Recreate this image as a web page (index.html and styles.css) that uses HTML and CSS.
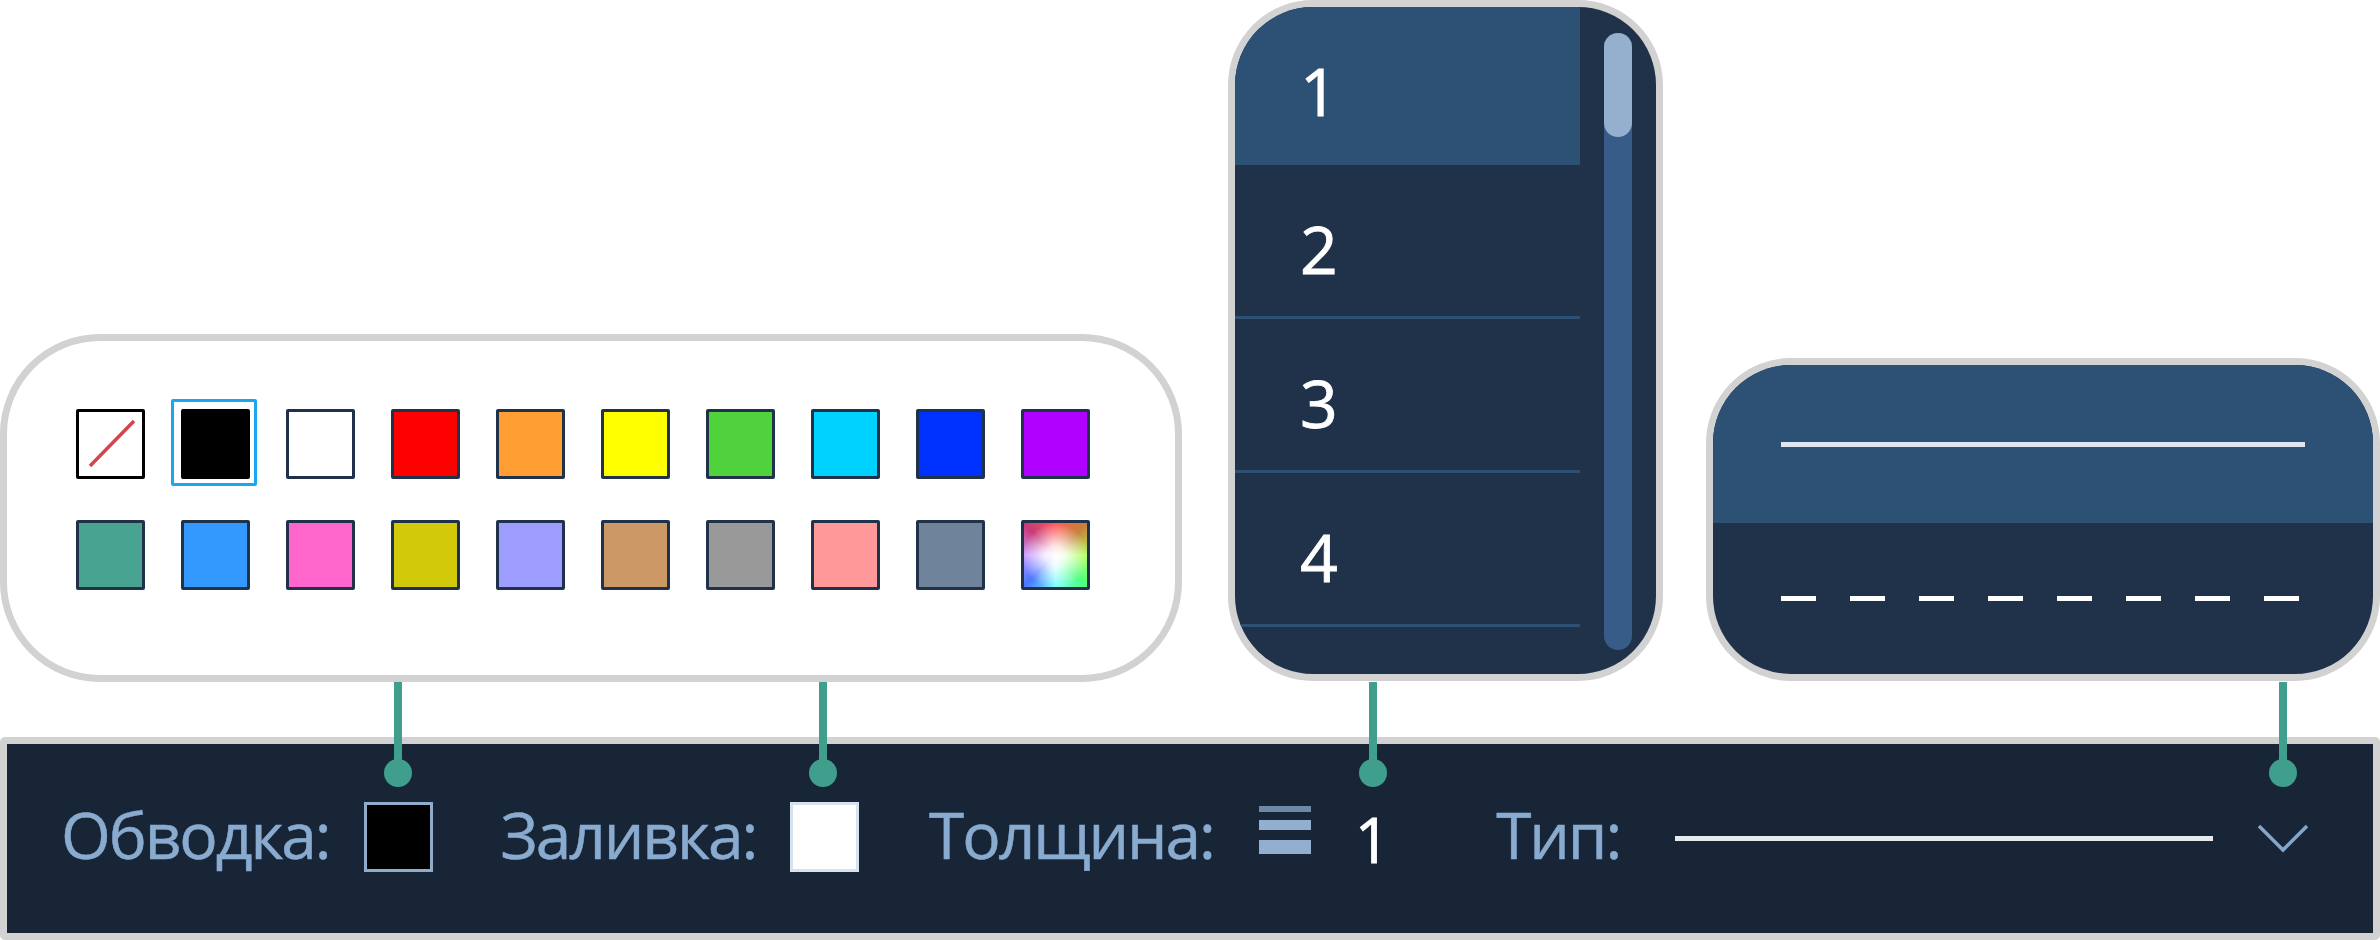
FILE: index.html
```html
<!DOCTYPE html>
<html lang="ru">
<head>
    <meta charset="UTF-8">
    <title>Панель обводки</title>
    <link rel="stylesheet" href="styles.css">
</head>
<body>
    <div class="board">
        <div class="callouts">
            <!-- Color palette -->
            <div class="panel palette">
                <div class="swatch swatch-none">
                    <svg class="none-line" viewBox="0 0 63 64"><line x1="11" y1="54" x2="55" y2="9"/></svg>
                </div>
                <div class="swatch swatch-selected" style="background:#000"></div>
                <div class="swatch" style="background:#fff"></div>
                <div class="swatch" style="background:#ff0000"></div>
                <div class="swatch" style="background:#ff9e33"></div>
                <div class="swatch" style="background:#ffff00"></div>
                <div class="swatch" style="background:#50d23c"></div>
                <div class="swatch" style="background:#00d2ff"></div>
                <div class="swatch" style="background:#0032ff"></div>
                <div class="swatch" style="background:#b000ff"></div>
                <div class="swatch" style="background:#48a391"></div>
                <div class="swatch" style="background:#3399ff"></div>
                <div class="swatch" style="background:#ff66cc"></div>
                <div class="swatch" style="background:#d2c90a"></div>
                <div class="swatch" style="background:#9d9dff"></div>
                <div class="swatch" style="background:#cc9966"></div>
                <div class="swatch" style="background:#999999"></div>
                <div class="swatch" style="background:#ff9999"></div>
                <div class="swatch" style="background:#6f849b"></div>
                <div class="swatch swatch-custom"></div>
            </div>

            <!-- Width dropdown -->
            <div class="panel widths">
                <ul class="width-list">
                    <li class="width-item is-active">1</li>
                    <li class="width-item">2</li>
                    <li class="width-item">3</li>
                    <li class="width-item">4</li>
                </ul>
                <div class="scroll-col">
                    <div class="scroll-track"><div class="scroll-thumb"></div></div>
                </div>
            </div>

            <!-- Line type dropdown -->
            <div class="panel types">
                <div class="type-row is-active"><span class="type-solid"></span></div>
                <div class="type-row">
                    <span class="type-dashes">
                        <i></i><i></i><i></i><i></i><i></i><i></i><i></i><i></i>
                    </span>
                </div>
            </div>
        </div>

        <!-- Toolbar -->
        <div class="toolbar">
            <span class="tool-label label-stroke">Обводка:</span>
            <span class="tool-color color-stroke"></span>
            <span class="tool-label label-fill">Заливка:</span>
            <span class="tool-color color-fill"></span>
            <span class="tool-label label-width">Толщина:</span>
            <span class="width-icon"><i></i><i></i><i></i></span>
            <span class="width-value">1</span>
            <span class="tool-label label-type">Тип:</span>
            <span class="type-preview"></span>
            <svg class="chevron" viewBox="0 0 52 29"><polyline points="2,2 26,26 50,2"/></svg>
        </div>

        <!-- Leader lines -->
        <span class="pin pin-stroke"></span>
        <span class="pin pin-fill"></span>
        <span class="pin pin-width"></span>
        <span class="pin pin-type"></span>
    </div>
</body>
</html>
```

FILE: styles.css
```css
body { margin: 0; background: #fff; font-family: "Open Sans", "Noto Sans", sans-serif; }
.board { position: relative; width: 2380px; height: 940px; overflow: hidden; filter: blur(.5px); }

.callouts { display: flex; align-items: flex-end; height: 682px; }
.panel { box-sizing: border-box; border: 7px solid #d2d2d2; overflow: hidden; }

/* palette */
.palette { display: grid; grid-template-columns: repeat(10, 69px); grid-auto-rows: 70px; column-gap: 36px; row-gap: 41px; align-content: start; width: 1182px; height: 348px; padding: 68px 0 0 69px; background: #fff; border-radius: 100px; }
.swatch { position: relative; box-sizing: border-box; border: 3.5px solid #1f3249; border-radius: 2px; }
.swatch-none { background: #fff; border-color: #000; }
.none-line { display: block; width: 100%; height: 100%; }
.none-line line { stroke: #d0474f; stroke-width: 3.5; }
.swatch-selected { border-color: #000; }
.swatch-selected::after { content: ""; position: absolute; left: -13px; top: -13px; right: -10px; bottom: -10px; border: 3px solid #1aa7ee; border-radius: 2px; }
.swatch-custom { background: radial-gradient(circle at 50% 52%, #fff 0, rgba(255,255,255,.85) 22%, rgba(255,255,255,0) 72%), conic-gradient(from 0deg, #ff5a5a, #c8803a 45deg, #b0ff5a 90deg, #50ff80 135deg, #70ffff 180deg, #4a78ff 225deg, #c89aff 270deg, #c83a78 315deg, #ff5a5a); }

/* width dropdown */
.widths { display: flex; width: 435px; height: 681px; margin: 0 0 1px 46px; background: #1f3249; border-radius: 85px; }
.width-list { width: 345px; margin: 0; padding: 0; list-style: none; }
.width-item { box-sizing: border-box; height: 154px; padding: 12px 0 0 65px; line-height: 142px; font-size: 66px; color: #fff; border-bottom: 3px solid #2d5075; -webkit-text-stroke: .8px #fff; }
.width-item.is-active { height: 158px; background: #2d5075; border-bottom: none; }
.scroll-col { flex: 1; padding: 26px 24px 24px; }
.scroll-track { height: 100%; background: #375c88; border-radius: 14px; }
.scroll-thumb { height: 104px; background: #95afcf; border-radius: 14px; }

/* line type dropdown */
.types { width: 674px; height: 323px; margin: 0 0 1px 43px; background: #1f3249; border-radius: 85px; }
.type-row { display: flex; align-items: center; box-sizing: border-box; padding-left: 68px; height: 154px; }
.type-row.is-active { height: 158px; background: #2d5075; }
.type-solid { display: block; width: 524px; height: 5px; background: #dfe5ec; }
.type-dashes { display: flex; gap: 34px; margin-top: -3px; }
.type-dashes i { display: block; width: 35px; height: 5px; background: #fff; }

/* toolbar */
.toolbar { display: flex; align-items: center; box-sizing: border-box; height: 203px; margin-top: 55px; padding-left: 54px; background: #172537; border: 7px solid #d2d2d2; border-radius: 5px; }
.tool-label { font-size: 64px; letter-spacing: -2.1px; line-height: 1; margin-top: -7px; color: #89abd0; -webkit-text-stroke: .5px #89abd0; }
.tool-color { box-sizing: border-box; width: 69px; height: 70px; border: 3px solid #8faccb; margin-top: -3px; }
.color-stroke { margin-left: 34px; background: #000; }
.color-fill { margin-left: 34px; background: #fff; border-color: #d6e2f0; }
.label-fill { margin-left: 68px; }
.label-width { margin-left: 70px; }
.width-icon { display: flex; flex-direction: column; gap: 8px; width: 52px; margin: -17px 0 0 45px; }
.width-icon i { display: block; background: #93afd0; }
.width-icon i:nth-child(1) { height: 6px; background: #6f88a6; }
.width-icon i:nth-child(2) { height: 10px; }
.width-icon i:nth-child(3) { height: 14px; margin-top: 2px; }
.width-value { margin-left: 44px; font-size: 62px; color: #fff; -webkit-text-stroke: .8px #fff; }
.label-type { margin-left: 106px; }
.type-preview { display: block; width: 538px; height: 5px; margin-left: 55px; background: #e6e9ee; }
.chevron { width: 52px; height: 29px; margin: 0 0 0 44px; fill: none; stroke: #86a6c8; stroke-width: 3.5; }

/* leader lines: sit over the gap and the toolbar */
.pin { position: absolute; top: 682px; width: 8px; height: 91px; margin-left: -4px; background: #3f9f8c; }
.pin::after { content: ""; position: absolute; left: -10px; bottom: -14px; width: 28px; height: 28px; border-radius: 50%; background: #3f9f8c; }
.pin-stroke { left: 398px; }
.pin-fill { left: 823px; }
.pin-width { left: 1373px; }
.pin-type { left: 2283px; }
```
